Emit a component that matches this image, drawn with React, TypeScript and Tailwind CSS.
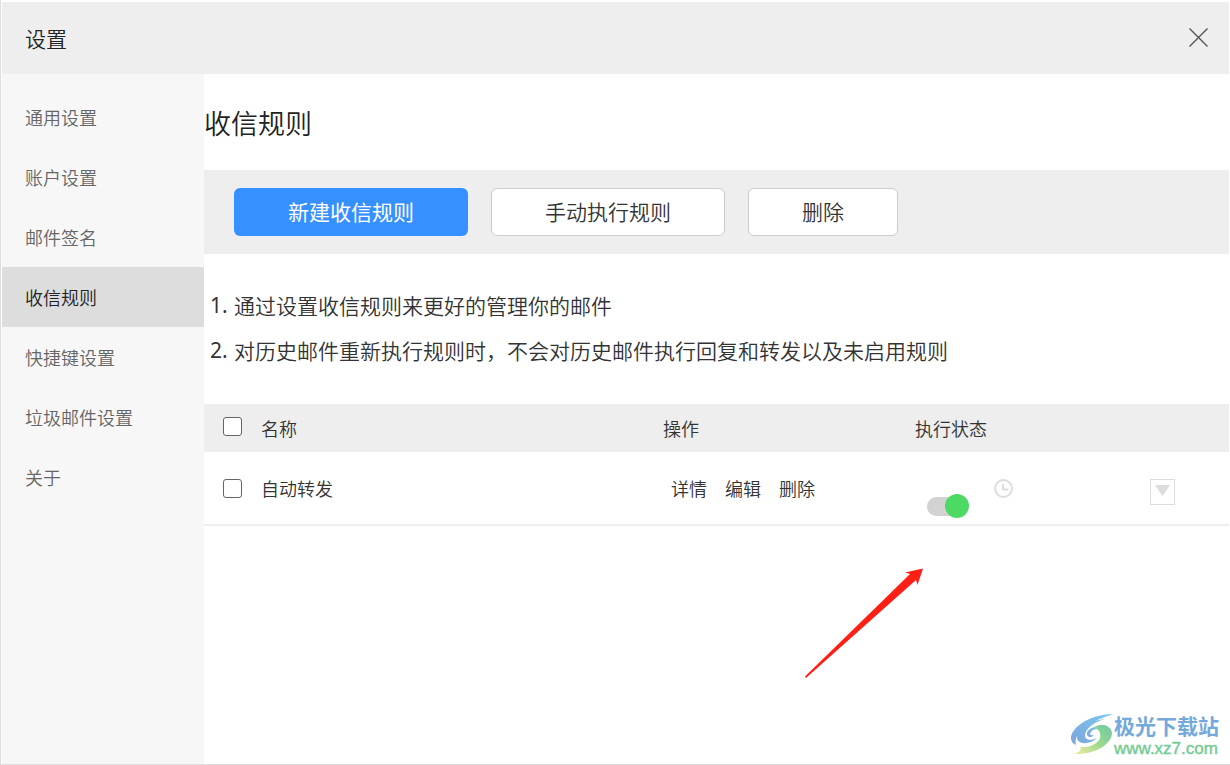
import { useState } from "react"
import clsx from "clsx"

const menuItems = ["通用设置", "账户设置", "邮件签名", "收信规则", "快捷键设置", "垃圾邮件设置", "关于"]

const tips = [
  "通过设置收信规则来更好的管理你的邮件",
  "对历史邮件重新执行规则时，不会对历史邮件执行回复和转发以及未启用规则",
]

const rules = [{ id: "auto-forward", name: "自动转发" }]

const rowActions = ["详情", "编辑", "删除"]

const checkboxClass =
  "block size-[19px] appearance-none rounded-[3px] border border-[#666] bg-white checked:bg-[#3790ff]"

function Header() {
  return (
    <header className="flex h-[72px] shrink-0 items-center justify-between bg-[#eee] pr-5 pl-[23px]">
      <h1 className="text-[21px] leading-8 text-[#222]">设置</h1>
      <button type="button" aria-label="关闭" className="size-5">
        <svg viewBox="0 0 20 20" className="block size-5" fill="none" stroke="#555" strokeWidth="1.4">
          <path d="M.5.500l18 18M18.500.500L.500 18.500" />
        </svg>
      </button>
    </header>
  )
}

function Sidebar({ active, onSelect }: { active: string; onSelect: (item: string) => void }) {
  return (
    <nav aria-label="设置" className="w-[202px] shrink-0 bg-[#f7f7f7] pt-[13px]">
      {menuItems.map((item) => (
        <button
          key={item}
          type="button"
          onClick={() => onSelect(item)}
          className={clsx(
            "block h-[60px] w-full pl-[23px] text-left text-[18px]",
            item === active ? "bg-[#ddd] text-[#222]" : "text-[#666]"
          )}
        >
          {item}
        </button>
      ))}
    </nav>
  )
}

function Toolbar() {
  return (
    <div className="flex h-[84px] items-center gap-[23px] bg-[#eee] px-[30px] text-[21px]">
      <button type="button" className="h-12 w-[234px] rounded-md bg-[#3790ff] font-normal text-white">
        新建收信规则
      </button>
      <button type="button" className="h-12 w-[234px] rounded-md border border-[#ccc] bg-white text-[#333]">
        手动执行规则
      </button>
      <button type="button" className="h-12 w-[150px] rounded-md border border-[#ccc] bg-white text-[#333]">
        删除
      </button>
    </div>
  )
}

function RulesTable() {
  return (
    <table className="w-full table-fixed text-left text-[18px] text-[#333]">
      <thead>
        <tr className="h-12 bg-[#eee]">
          <th className="w-[57px] pb-1 pl-[19px]">
            <input type="checkbox" aria-label="全选" className={checkboxClass} />
          </th>
          <th className="w-[402px] font-[350]">名称</th>
          <th className="w-[252px] font-[350]">操作</th>
          <th className="font-[350]">执行状态</th>
          <th className="w-[79px]" />
        </tr>
      </thead>
      <tbody>
        {rules.map((rule) => (
          <tr key={rule.id} className="h-[73px] border-b-2 border-[#eee]">
            <td className="pl-[19px]">
              <input type="checkbox" aria-label={rule.name} className={checkboxClass} />
            </td>
            <td>{rule.name}</td>
            <td className="pl-2">
              <div className="flex gap-[18px]">
                {rowActions.map((action) => (
                  <a key={action} href={`#${rule.id}`}>
                    {action}
                  </a>
                ))}
              </div>
            </td>
            <td className="pt-[22px]">
              <div className="flex h-10 items-start gap-[25px] pl-3">
                <input
                  type="checkbox"
                  role="switch"
                  defaultChecked
                  aria-label="启用规则"
                  className="relative mt-[15px] h-6 w-[42px] appearance-none before:absolute before:top-[3px] before:left-0 before:h-[19px] before:w-9 before:rounded-full before:bg-[#d2d2d2] after:absolute after:top-0 after:left-0 after:size-6 after:rounded-full after:bg-[#999] checked:after:left-[18px] checked:after:bg-[#4cd964]"
                />
                <svg viewBox="0 0 19 19" className="size-[19px]" fill="none" stroke="#ddd" strokeWidth="2">
                  <circle cx="9.500" cy="9.500" r="8.400" />
                  <path d="M9 5v5.500h5.500" />
                </svg>
              </div>
            </td>
            <td className="pt-[7px]">
              <button
                type="button"
                aria-label="移动规则"
                className="flex h-[26px] w-[25px] justify-center border border-[#ddd] pt-[5px]"
              >
                <svg viewBox="0 0 15 11" className="h-[11px] w-[15px]" fill="#ddd">
                  <path d="M1.500 0h12q1.500 0 .7 1.200l-5.700 8.600q-1 1.300-2 0L.8 1.200Q0 0 1.500 0z" />
                </svg>
              </button>
            </td>
          </tr>
        ))}
      </tbody>
    </table>
  )
}

function Watermark() {
  return (
    <div className="absolute right-[11px] bottom-[6px] flex items-center">
      <svg viewBox="0 0 44 42" className="h-[42px] w-[44px]">
        <defs>
          <linearGradient id="swirlBlue" x1="1" y1="0" x2="0" y2="1">
            <stop offset="0" stopColor="#7cc6ee" />
            <stop offset="1" stopColor="#7ba6dc" />
          </linearGradient>
          <linearGradient id="swirlGreen" x1="1" y1="0" x2="0" y2="1">
            <stop offset="0" stopColor="#6cc8a6" />
            <stop offset="0.5" stopColor="#9cd98f" />
            <stop offset="1" stopColor="#f0ec9c" />
          </linearGradient>
        </defs>
        <path
          fill="url(#swirlBlue)"
          d="M44 1C31 1 17 5 8 13C-1 21-1 29 6 32C4 25 9 18 17 13C24 8 33 4 44 1z"
        />
        <path
          fill="url(#swirlBlue)"
          d="M35 6C22 7 7 14 7 24C7 32 20 32 27 25C21 28 15 27 15 23C15 16 24 9 35 6z"
        />
        <path
          fill="url(#swirlBlue)"
          d="M33 15C27 12 18 15 17 20C16 25 22 25 24 22C20 23 19 21 21 19C23 16 28 15 33 15z"
        />
        <path
          fill="url(#swirlGreen)"
          d="M24 15C30 9 41 12 42 20C42 31 25 42 4 41C10 39 12 36 10 34C19 35 28 31 30 25C31 20 29 16 24 15z"
        />
      </svg>
      <div className="text-[#74a9dc]">
        <p className="text-[21px] leading-[30px] font-bold">极光下载站</p>
        <p className="text-[17px] leading-[18px] font-normal text-[#72cb92] [font-family:'Liberation_Sans',sans-serif] [-webkit-text-stroke:0.4px]">
          www.xz7.com
        </p>
      </div>
    </div>
  )
}

export default function App() {
  const [active, setActive] = useState("收信规则")

  return (
    <div className="relative flex min-h-screen flex-col border-b border-l border-[#ddd] bg-white pt-[2px] pr-px pl-px font-[350] [font-family:'Noto_Sans_CJK_SC',sans-serif]">
      <Header />
      <div className="flex flex-1">
        <Sidebar active={active} onSelect={setActive} />
        <main className="min-w-0 flex-1">
          <h2 className="flex h-24 items-center pt-[2px] text-[27px] text-[#222]">收信规则</h2>
          <Toolbar />
          <ol className="pt-[29px] pb-[31px] pl-[6px] text-[21px] leading-[45px] text-[#333]">
            {tips.map((tip, index) => (
              <li key={tip} className="flex">
                <span className="w-6 shrink-0 font-normal [font-family:'Noto_Sans',sans-serif]">{index + 1}.</span>
                {tip}
              </li>
            ))}
          </ol>
          <RulesTable />
        </main>
      </div>

      {/* Pointer to the rule switch */}
      <svg viewBox="0 0 119 110" className="absolute top-[568px] left-[803px] h-[110px] w-[119px]" fill="#ff2015">
        <path d="M119 0.500L101 4.500L106 6L1 108.500L2 110L112 12L113.500 17z" />
      </svg>
      <Watermark />
    </div>
  )
}
